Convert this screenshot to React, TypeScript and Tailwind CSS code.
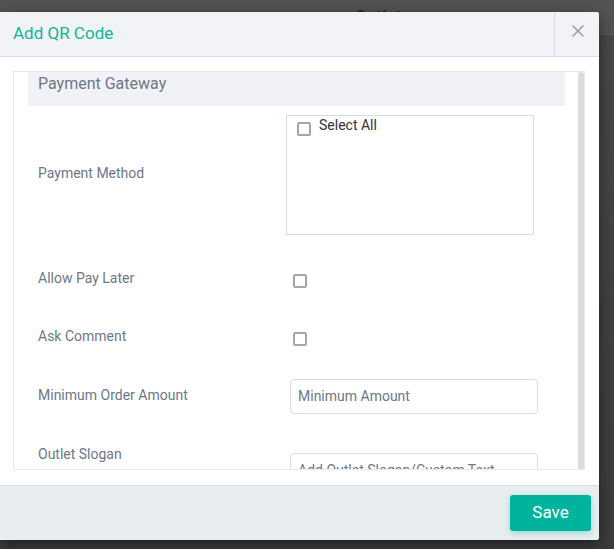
import React from 'react';
import { X } from 'lucide-react';

const font = { fontFamily: 'Roboto, "Liberation Sans", sans-serif' };

function Box({ className = '' }: { className?: string }) {
  return <span className={`block w-[14px] h-[14px] border-2 border-[#a6a6a6] rounded-[2px] bg-white ${className}`} />;
}

export default function App() {
  return (
    <div className="relative w-[614px] h-[549px] overflow-hidden bg-[#464646]" style={font}>
      {/* page behind the overlay */}
      <div className="h-[35px] bg-[#535353] border-b border-[#5d5d5d] pl-[355px] pt-[4px]">
        <span className="text-[17px] font-bold text-[#262626]">Outlets</span>
      </div>
      <div className="h-[514px] bg-gradient-to-b from-[#484848] to-[#3c3c3c]" />

      {/* modal */}
      <div className="absolute left-0 top-[12px] w-[599px] h-[528px] bg-white rounded-r-[3px] shadow-[0_5px_15px_rgba(0,0,0,0.5)] flex flex-col overflow-hidden">
        <div className="h-[45px] shrink-0 flex bg-[#f1f3f6] border-b border-[#d8dee4]">
          <h3 className="flex-1 pl-[13px] pt-[9px] text-[17px] text-[#13b59b]">Add QR Code</h3>
          <div className="w-[45px] border-l border-[#d8dee4] flex items-center justify-center pb-[6px] pl-[1px]">
            <X className="w-[20px] h-[20px] text-[#9c9c9c]" strokeWidth={1.8} />
          </div>
        </div>

        <div className="flex-1 pt-[14px] pl-[13px] pr-[14px] pb-[14px]">
          <div className="relative h-[399px] border border-[#e5e8ec] overflow-hidden">
            <div className="absolute right-[0px] top-0 w-[6px] h-[398px] bg-[#dcdcdc] rounded-[3px]" />
            <div className="pl-[14px] pr-[19px]">
              <div className="h-[34px] bg-[#f1f2f6] pl-[10px] pb-[10px] flex items-center text-[16px] text-[#6d7788]">
                Payment Gateway
              </div>

              <div className="flex mt-[9px] h-[120px] text-[14px] text-[#6d7788]">
                <div className="w-[258px] pl-[10px] pt-[48px] leading-[20px]">Payment Method</div>
                <div className="w-[248px] h-[120px] border border-[#d3dce5]">
                  <div className="flex items-start pl-[10px] pt-[6px] gap-[8px]">
                    <Box />
                    <span className="text-[14px] leading-[16px] text-[#333] -mt-[5px]">Select All</span>
                  </div>
                </div>
              </div>

              <div className="flex mt-[33px] text-[14px] text-[#6d7788]">
                <div className="w-[265px] pl-[10px] leading-[20px]">Allow Pay Later</div>
                <Box className="mt-[6px]" />
              </div>

              <div className="flex mt-[38px] text-[14px] text-[#6d7788]">
                <div className="w-[265px] pl-[10px] leading-[20px]">Ask Comment</div>
                <Box className="mt-[6px]" />
              </div>

              <div className="flex mt-[33px] h-[35px] text-[14px] text-[#6d7788]">
                <div className="w-[262px] pl-[10px] pt-[6px] leading-[20px]">Minimum Order Amount</div>
                <div className="w-[248px] h-[35px] border border-[#d5dde6] rounded-[4px] pl-[7px] flex items-center text-[#6d7788]">
                  Minimum Amount
                </div>
              </div>

              <div className="flex mt-[30px] text-[14px] text-[#6d7788]">
                <div className="w-[262px] pl-[10px] leading-[20px]">Outlet Slogan</div>
                <div className="mt-[9px] w-[248px] h-[35px] border border-[#d5dde6] rounded-[4px] pl-[7px] flex items-center text-[#6d7788]">
                  Add Outlet Slogan/Custom Text
                </div>
              </div>
            </div>
          </div>
        </div>

        <div className="h-[55px] shrink-0 bg-[#e9edf0] border-t border-[#d8dee4] flex justify-end items-start pt-[9px] pr-[8px]">
          <button className="w-[81px] h-[36px] rounded-[3px] bg-[#00b39e] text-white text-[17px] shadow-[0_2px_6px_rgba(0,179,158,0.35)]">
            Save
          </button>
        </div>
      </div>
    </div>
  );
}
